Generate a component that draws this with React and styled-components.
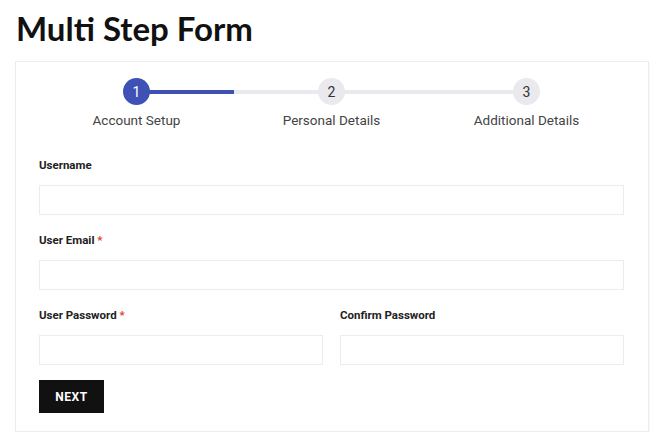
import styled, { createGlobalStyle } from "styled-components";

const GlobalStyle = createGlobalStyle`
    body {
        margin: 0;
        background: #fff;
        font-family: Roboto, "Liberation Sans", sans-serif;
    }
`

const Page = styled.div`
    padding: 8px 11px 0 15px;
`

const Title = styled.h1`
    margin: 0 0 13px 1px;
    font-family: Lato, "Open Sans", sans-serif;
    font-size: 33px;
    font-weight: 700;
    line-height: 40px;
    color: #111;
`

const Card = styled.div`
    border: 1px solid #ececec;
    padding: 16px 24px 18px 23px;
    box-shadow: 1px 1px 2px rgba(0, 0, 0, 0.03);
`

const Steps = styled.div`
    display: grid;
    grid-template-columns: repeat(3, 1fr);
    margin-bottom: 30px;
`

const Step = styled.div`
    position: relative;
    display: flex;
    flex-direction: column;
    align-items: center;
`

const Track = styled.div`
    position: absolute;
    top: 12px;
    left: 50%;
    width: 100%;
    height: 4px;
    background: ${p => p.$done
        ? "linear-gradient(to right, #3f51b5 50%, #e9e9ee 50%)"
        : "#e9e9ee"};
`

const Circle = styled.div`
    position: relative;
    z-index: 1;
    width: 27px;
    height: 27px;
    border-radius: 50%;
    display: flex;
    align-items: center;
    justify-content: center;
    font-size: 14px;
    background: ${p => p.$active ? "#3f51b5" : "#e9e9ee"};
    color: ${p => p.$active ? "#fff" : "#333"};
`

const StepLabel = styled.div`
    margin-top: 7px;
    font-size: 13.5px;
    color: #444;
`

const Field = styled.div`
    display: flex;
    flex-direction: column;
    margin-bottom: 18px;
`

const Row = styled.div`
    display: grid;
    grid-template-columns: 1fr 1fr;
    gap: 17px;
`

const Label = styled.label`
    font-size: 11.5px;
    font-weight: 700;
    color: #222;
    margin-bottom: 13px;
    line-height: 14px;

    span {
        color: #e2401c;
    }
`

const Input = styled.input`
    box-sizing: border-box;
    height: 30px;
    border: 1px solid #ececec;
    background: #fff;
    outline: none;
    padding: 0 8px;
`

const Button = styled.button`
    margin-top: -3px;
    width: 65px;
    height: 33px;
    border: none;
    background: #111;
    color: #fff;
    font-family: Roboto, sans-serif;
    font-size: 12px;
    font-weight: 700;
    letter-spacing: 0.6px;
`

const steps = ["Account Setup", "Personal Details", "Additional Details"]

function App() {
    return <Page>
        <GlobalStyle />
        <Title>Multi Step Form</Title>
        <Card>
            <Steps>
                {steps.map((s, i) => (
                    <Step key={s}>
                        {i < steps.length - 1 && <Track $done={i === 0} />}
                        <Circle $active={i === 0}>{i + 1}</Circle>
                        <StepLabel>{s}</StepLabel>
                    </Step>
                ))}
            </Steps>
            <Field>
                <Label htmlFor="username">Username</Label>
                <Input id="username" type="text" />
            </Field>
            <Field>
                <Label htmlFor="email">User Email <span>*</span></Label>
                <Input id="email" type="email" />
            </Field>
            <Row>
                <Field>
                    <Label htmlFor="password">User Password <span>*</span></Label>
                    <Input id="password" type="password" />
                </Field>
                <Field>
                    <Label htmlFor="confirm">Confirm Password</Label>
                    <Input id="confirm" type="password" />
                </Field>
            </Row>
            <Button>NEXT</Button>
        </Card>
    </Page>
}

export default App
